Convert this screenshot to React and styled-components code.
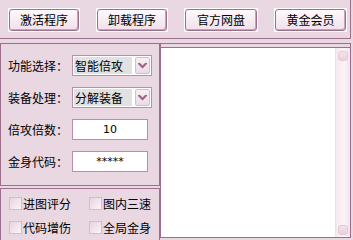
import React from "react";
import styled, { createGlobalStyle } from "styled-components";

const Global = createGlobalStyle`
  html, body { margin: 0; padding: 0; background: #e9d8e2; }
  body { font-family: "Noto Sans CJK SC", "Noto Sans", sans-serif; font-size: 12px; color: #000; }
  * { box-sizing: border-box; }
`;

const BORDER = "#9e6f8d";

const Window = styled.div`
  width: 353px;
  height: 240px;
  background: #e9d8e2;
  overflow: hidden;
`;

const TopBar = styled.div`
  width: 351px;
  height: 39px;
  border-bottom: 1px solid ${BORDER};
  border-right: 1px solid ${BORDER};
  display: flex;
  align-items: flex-start;
  gap: 16px;
  padding: 8px 0 0 8px;
`;

const ButtonFrame = styled.div`
  background: #fff;
  padding: 1px;
`;

const Button = styled.button`
  width: ${(p) => p.$w}px;
  height: 22px;
  border: 1px solid ${BORDER};
  border-radius: 3px;
  background: linear-gradient(#fdf8fb, #f1e1ea);
  box-shadow: inset -1px -1px 0 #c9a3bb;
  font: 12px/20px "Noto Sans CJK SC", sans-serif;
  color: #000;
  padding: 0;
  display: block;
`;

const Main = styled.div`
  margin-top: 4px;
  display: flex;
  align-items: flex-start;
`;

const LeftColumn = styled.div`
  width: 160px;
  display: flex;
  flex-direction: column;
  gap: 2px;
`;

const FormPanel = styled.div`
  height: 143px;
  border: 1px solid ${BORDER};
  display: flex;
  flex-direction: column;
  gap: 11px;
  padding: 11px 0 0 7px;
`;

const Row = styled.div`
  height: 21px;
  display: flex;
  align-items: center;
`;

const Label = styled.span`
  width: 64px;
  line-height: 14px;
  white-space: nowrap;
`;

const Select = styled.div`
  width: 80px;
  height: 21px;
  border: 1px solid #b690aa;
  background: #fff;
  display: flex;
  align-items: center;
  padding: 1px;
  gap: 3px;
`;

const SelectText = styled.span`
  flex: 1;
  height: 17px;
  background: #e1e1e1;
  line-height: 17px;
  padding-left: 1px;
  white-space: nowrap;
`;

const DropButton = styled.span`
  width: 15px;
  height: 17px;
  border: 1px solid #d8bccd;
  border-radius: 2px;
  background: linear-gradient(#f8eef4, #ecdbe5);
  display: flex;
  align-items: center;
  justify-content: center;
`;

const Input = styled.div`
  width: 76px;
  height: 21px;
  border: 1px solid #b690aa;
  background: #fff;
  text-align: center;
  line-height: 19px;
  font-family: "DejaVu Sans", "Noto Sans CJK SC", sans-serif;
  font-size: 11px;
`;

const CheckPanel = styled.div`
  height: 60px;
  border-top: 1px solid ${BORDER};
  border-left: 1px solid ${BORDER};
  border-right: 1px solid ${BORDER};
  display: grid;
  grid-template-columns: 80px 70px;
  row-gap: 11px;
  padding: 8px 0 0 8px;
  align-content: start;
`;

const CheckItem = styled.label`
  display: flex;
  align-items: center;
  height: 13px;
  white-space: nowrap;
`;

const Box = styled.span`
  width: 13px;
  height: 13px;
  border: 1px solid #d4bccb;
  background: linear-gradient(135deg, #e6d2dd, #fbf6f9);
  margin-right: 1px;
  flex: none;
`;

const RightPanel = styled.div`
  width: 191px;
  height: 195px;
  border: 1px solid ${BORDER};
  padding-top: 3px;
  display: flex;
  flex-direction: column;
`;

const TextArea = styled.div`
  flex: 1;
  border-top: 1px solid ${BORDER};
  background: #fff;
  display: flex;
  justify-content: flex-end;
`;

const ScrollBar = styled.div`
  width: 15px;
  border-left: 1px solid #efdde7;
  background: linear-gradient(90deg, #f6e9f0, #fbf4f8 60%, #f3e3ec);
  display: flex;
  flex-direction: column;
  justify-content: space-between;
`;

const ScrollBtn = styled.div`
  height: 15px;
  display: flex;
  align-items: center;
  justify-content: center;
`;

const Knob = styled.span`
  width: 10px;
  height: 10px;
  border-radius: 3px;
  border: 1px solid #e2c9d7;
  background: linear-gradient(#f2e2eb, #e8d3df);
`;

const Chevron = () => (
  <svg width="9" height="6" viewBox="0 0 9 6">
    <path d="M0 0h2l2.5 2.5L7 0h2v1L4.5 5.5 0 1z" fill="#a0608a" />
  </svg>
);

const buttons = [
  ["激活程序", 70],
  ["卸载程序", 70],
  ["官方网盘", 72],
  ["黄金会员", 71],
];

const checks = ["进图评分", "图内三速", "代码增伤", "全局金身"];

export default function App() {
  return (
    <Window>
      <Global />
      <TopBar>
        {buttons.map(([t, w]) => (
          <ButtonFrame key={t}>
            <Button $w={w}>{t}</Button>
          </ButtonFrame>
        ))}
      </TopBar>
      <Main>
        <LeftColumn>
          <FormPanel>
            <Row>
              <Label>功能选择：</Label>
              <Select>
                <SelectText>智能倍攻</SelectText>
                <DropButton><Chevron /></DropButton>
              </Select>
            </Row>
            <Row>
              <Label>装备处理：</Label>
              <Select>
                <SelectText>分解装备</SelectText>
                <DropButton><Chevron /></DropButton>
              </Select>
            </Row>
            <Row>
              <Label>倍攻倍数：</Label>
              <Input>10</Input>
            </Row>
            <Row>
              <Label>金身代码：</Label>
              <Input>*****</Input>
            </Row>
          </FormPanel>
          <CheckPanel>
            {checks.map((c) => (
              <CheckItem key={c}>
                <Box />
                {c}
              </CheckItem>
            ))}
          </CheckPanel>
        </LeftColumn>
        <RightPanel>
          <TextArea>
            <ScrollBar>
              <ScrollBtn><Knob /></ScrollBtn>
              <ScrollBtn><Knob /></ScrollBtn>
            </ScrollBar>
          </TextArea>
        </RightPanel>
      </Main>
    </Window>
  );
}
